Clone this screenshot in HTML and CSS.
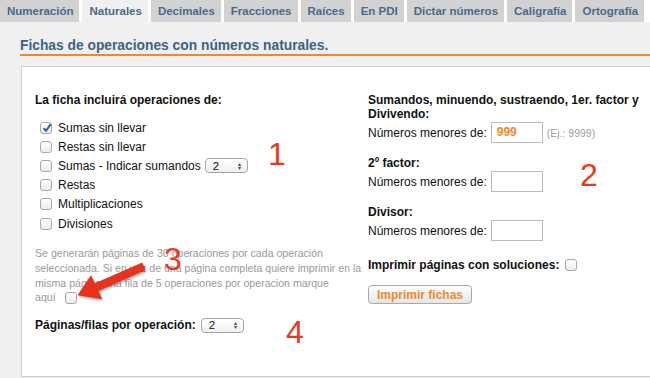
FILE: index.html
```html
<!DOCTYPE html>
<html lang="es">
<head>
<meta charset="utf-8">
<title>Fichas de operaciones</title>
<link rel="stylesheet" href="styles.css">
</head>
<body>
<nav class="tabs">
  <a class="tab">Numeración</a>
  <a class="tab active">Naturales</a>
  <a class="tab">Decimales</a>
  <a class="tab">Fracciones</a>
  <a class="tab">Raíces</a>
  <a class="tab">En PDI</a>
  <a class="tab">Dictar números</a>
  <a class="tab">Caligrafía</a>
  <a class="tab">Ortografía</a>
</nav>
<main class="panel">
  <h1 class="title">Fichas de operaciones con números naturales.</h1>
  <section class="box">
    <div class="col left">
      <div class="heading">La ficha incluirá operaciones de:</div>
      <ul class="checks">
        <li><span class="cb checked"><svg viewBox="0 0 12 12" width="12" height="12"><path d="M2.6 6.2 L5 8.8 L9.8 2.2" fill="none" stroke="#2b5f9e" stroke-width="2"/></svg></span>Sumas sin llevar</li>
        <li><span class="cb"></span>Restas sin llevar</li>
        <li><span class="cb"></span>Sumas - Indicar sumandos <span class="select">2<span class="arrows">▴<br>▾</span></span></li>
        <li><span class="cb"></span>Restas</li>
        <li><span class="cb"></span>Multiplicaciones</li>
        <li><span class="cb"></span>Divisiones</li>
      </ul>
      <p class="note">Se generarán páginas de 30 operaciones por cada operación seleccionada. Si en vez de una página completa quiere imprimir en la misma página una fila de 5 operaciones por operacion marque<br>aquí <span class="cb inline"></span></p>
      <div class="pages"><span class="heading">Páginas/filas por operación:</span> <span class="select">2<span class="arrows">▴<br>▾</span></span></div>
    </div>
    <div class="col right">
      <div class="heading">Sumandos, minuendo, sustraendo, 1er. factor y Divivendo:</div>
      <div class="field"><span>Números menores de:</span><span class="input orange">999</span><span class="hint">(Ej.: 9999)</span></div>
      <div class="heading gap">2º factor:</div>
      <div class="field"><span>Números menores de:</span><span class="input"></span></div>
      <div class="heading gap">Divisor:</div>
      <div class="field"><span>Números menores de:</span><span class="input"></span></div>
      <div class="heading sol">Imprimir páginas con soluciones: <span class="cb inline"></span></div>
      <button class="btn">Imprimir fichas</button>
    </div>
  </section>
</main>
<div class="annot n1">1</div>
<div class="annot n2">2</div>
<div class="annot n3">3</div>
<div class="annot n4">4</div>
<svg class="arrow" width="110" height="60" viewBox="0 0 110 60">
  <defs><filter id="sh" x="-20%" y="-30%" width="140%" height="160%"><feDropShadow dx="1" dy="1.5" stdDeviation="1.2" flood-color="#000" flood-opacity="0.35"/></filter></defs>
  <polygon filter="url(#sh)" fill="#e8321c" stroke="#c9230f" stroke-width="0.6" stroke-linejoin="round" points="20,45 33,25.8 36.6,33.8 84,13 87,20 40,40.8 43.6,48.8"/>
</svg>
</body>
</html>
```

FILE: styles.css
```css
* { box-sizing: border-box; }
html, body { margin: 0; padding: 0; }
body {
  width: 650px;
  height: 378px;
  overflow: hidden;
  background: #ffffff;
  font-family: "Liberation Sans", Arial, sans-serif;
  color: #111;
  position: relative;
}
.tabs {
  display: flex;
  gap: 3px;
  height: 22px;
}
.tab {
  display: flex;
  align-items: center;
  flex: none;
  white-space: nowrap;
  padding: 0 6px 0 7px;
  background: #d2d2d2;
  color: #4c6a86;
  font-weight: bold;
  font-size: 11.5px;
}
.tab.active { background: #f0f0f0; }
.panel {
  background: #f0f0f0;
  padding: 16px 0 0 20px;
  height: 356px;
}
.title {
  margin: 0;
  font-size: 13.8px;
  line-height: 16px;
  color: #3e6286;
  font-weight: bold;
  border-bottom: 2px solid #ef8a2c;
}
.box {
  margin: 10px 0 0 1px;
  background: #fff;
  border: 1px solid #cfcfcf;
  border-right: none;
  height: 311px;
  display: flex;
  padding-top: 26px;
}
.col.left { width: 333px; padding-left: 13px; }
.col.right { padding-left: 13px; }
.heading {
  font-weight: bold;
  font-size: 12px;
  line-height: 14px;
}
.checks {
  list-style: none;
  margin: 11px 0 0 0;
  padding: 0 0 0 5px;
}
.checks li {
  height: 19.2px;
  display: flex;
  align-items: center;
  font-size: 12px;
}
.cb {
  display: inline-block;
  width: 12px;
  height: 12px;
  border: 1px solid #a8a8a8;
  border-radius: 3px;
  background: linear-gradient(#ffffff, #ececec);
  margin-right: 6px;
  flex: none;
  position: relative;
  vertical-align: middle;
}
.cb svg { position: absolute; left: 0; top: -1px; }
.cb.inline { margin: 0 0 0 4px; }
.select {
  display: inline-flex;
  align-items: center;
  justify-content: space-between;
  width: 43px;
  height: 15px;
  border: 1px solid #a5a5a5;
  border-radius: 4px;
  background: linear-gradient(#ffffff, #f0f0f0);
  margin-left: 4px;
  padding: 0 6px 0 7px;
  font-size: 11.5px;
}
.arrows {
  font-size: 6px;
  line-height: 4px;
  color: #444;
  text-align: center;
}
.note {
  margin: 13px 0 0 0;
  color: #9a9a9a;
  font-size: 10.6px;
  line-height: 14.7px;
  width: 332px;
}
.note .cb { margin-left: 6px; }
.pages {
  margin-top: 11px;
  height: 19px;
  display: flex;
  align-items: center;
}
.pages .select { margin-left: 5px; }
.right .heading { width: 285px; }
.field {
  display: flex;
  align-items: center;
  height: 21px;
  margin-top: 1px;
  font-size: 12px;
}
.input {
  display: inline-block;
  width: 52px;
  height: 21px;
  border: 1px solid #bcbcbc;
  margin-left: 4px;
  background: #fff;
  font-size: 12px;
  font-weight: bold;
  line-height: 19px;
  padding-left: 5px;
}
.input.orange { color: #f08a2a; }
.hint { color: #a0a0a0; font-size: 10.5px; margin-left: 4px; }
.heading.gap { margin-top: 13px; }
.heading.sol { margin-top: 17px; display: flex; align-items: center; }
.heading.sol .cb { margin-left: 6px; }
.btn {
  display: block;
  margin-top: 13px;
  width: 104px;
  height: 19px;
  padding: 0;
  border: 1px solid #a9a9a9;
  border-radius: 4px;
  background: linear-gradient(#ffffff, #e6e6e6);
  color: #f08a2a;
  font-family: "Liberation Sans", Arial, sans-serif;
  font-weight: bold;
  font-size: 12px;
}
.annot {
  position: absolute;
  color: #ea3a1e;
  font-family: "Liberation Sans", Arial, sans-serif;
  font-size: 32px;
  line-height: 32px;
}
.n1 { left: 268px; top: 138px; }
.n2 { left: 580px; top: 159px; }
.n3 { left: 164px; top: 243px; }
.n4 { left: 286px; top: 316px; }
.arrow { position: absolute; left: 58px; top: 250px; }
```
